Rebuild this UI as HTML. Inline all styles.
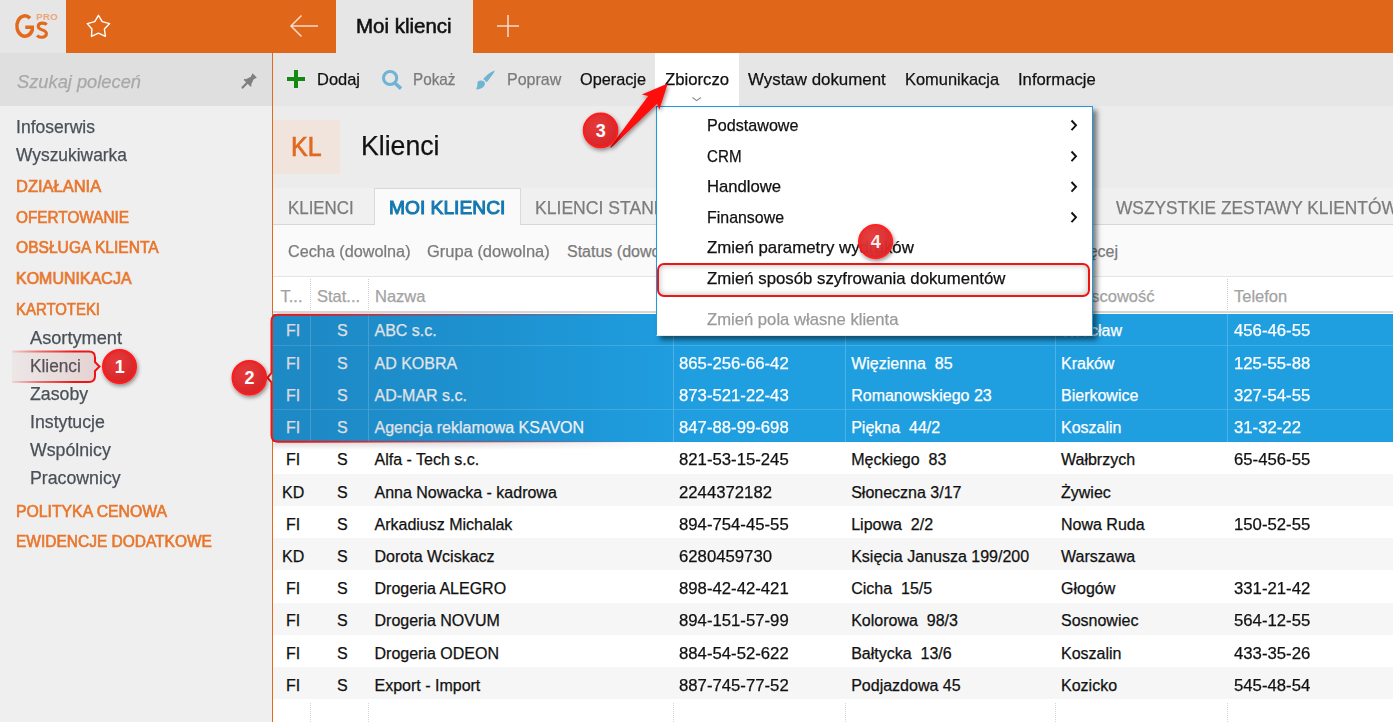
<!DOCTYPE html>
<html><head><meta charset="utf-8">
<style>
*{margin:0;padding:0;box-sizing:border-box}
html,body{width:1393px;height:722px;overflow:hidden;background:#fff;font-family:"Liberation Sans",sans-serif}
.a{position:absolute}
.t{position:absolute;white-space:pre;transform-origin:0 0;z-index:2;-webkit-text-stroke:0.25px currentColor}
.m .t{z-index:6}
</style></head><body>
<!-- top bar -->
<div class="a" style="left:0;top:0;width:66px;height:53px;background:#e6e6e6"></div>
<div class="a" style="left:66px;top:0;width:1327px;height:53px;background:#e0661a"></div>
<div class="a" style="left:336px;top:0;width:137px;height:53px;background:#e6e6e6"></div>
<!-- sidebar -->
<div class="a" style="left:0;top:53px;width:272px;height:53px;background:#dfdfdf"></div>
<div class="a" style="left:0;top:106px;width:272px;height:616px;background:#efefef"></div>
<div class="a" style="left:272px;top:53px;width:1px;height:669px;background:#e2691f;z-index:3"></div>
<!-- toolbar -->
<div class="a" style="left:273px;top:53px;width:1120px;height:53px;background:#e6e6e6"></div>
<div class="a" style="left:655px;top:53px;width:84px;height:53px;background:#fff"></div>
<!-- header -->
<div class="a" style="left:273px;top:106px;width:1120px;height:82px;background:#ececec"></div>
<div class="a" style="left:273px;top:120px;width:67px;height:54px;background:#f0e4dc"></div>
<!-- tabs -->
<div class="a" style="left:273px;top:188px;width:1120px;height:37px;background:#f0f0f0;border-bottom:1px solid #d6d6d6"></div>
<div class="a" style="left:374px;top:188px;width:147px;height:37px;background:#fafafa;border:1px solid #d9d9d9;border-bottom:none"></div>
<!-- filter -->
<div class="a" style="left:273px;top:225px;width:1120px;height:52px;background:#fafafa;border-bottom:1px solid #e4e4e4"></div>
<!-- table header -->
<div class="a" style="left:273px;top:277px;width:1120px;height:36px;background:#fff;border-bottom:2px solid #d6d6d6"></div>
<!-- rows -->
<div id="rows"></div>
<div class="a" style="left:273px;top:313.50px;width:1120px;height:32.42px;background:#1f9ee0"></div>
<div class="a" style="left:273px;top:345.62px;width:1120px;height:32.42px;background:#1f9ee0"></div>
<div class="a" style="left:273px;top:377.74px;width:1120px;height:32.42px;background:#1f9ee0"></div>
<div class="a" style="left:273px;top:409.86px;width:1120px;height:32.42px;background:#1f9ee0"></div>
<div class="a" style="left:273px;top:441.98px;width:1120px;height:32.42px;background:#fff"></div>
<div class="a" style="left:273px;top:474.10px;width:1120px;height:32.42px;background:#f6f6f6"></div>
<div class="a" style="left:273px;top:506.22px;width:1120px;height:32.42px;background:#fff"></div>
<div class="a" style="left:273px;top:538.34px;width:1120px;height:32.42px;background:#f6f6f6"></div>
<div class="a" style="left:273px;top:570.46px;width:1120px;height:32.42px;background:#fff"></div>
<div class="a" style="left:273px;top:602.58px;width:1120px;height:32.42px;background:#f6f6f6"></div>
<div class="a" style="left:273px;top:634.70px;width:1120px;height:32.42px;background:#fff"></div>
<div class="a" style="left:273px;top:666.82px;width:1120px;height:32.42px;background:#f6f6f6"></div>
<div class="a" style="left:273px;top:698.94px;width:1120px;height:32.42px;background:#fff"></div>
<div class="a" style="left:273px;top:345.12px;width:1120px;height:1px;background:#45ade6"></div>
<div class="a" style="left:273px;top:409.36px;width:1120px;height:1px;background:#45ade6"></div>
<div class="a" style="left:310px;top:313.5px;width:1px;height:128.48px;background:#4db2e8"></div>
<div class="a" style="left:310px;top:279px;width:1px;height:31px;border-left:1px dotted #cfcfcf"></div>
<div class="a" style="left:310px;top:702.9px;width:1px;height:23.1px;border-left:1px dotted #d5d5d5"></div>
<div class="a" style="left:368px;top:313.5px;width:1px;height:128.48px;background:#4db2e8"></div>
<div class="a" style="left:368px;top:279px;width:1px;height:31px;border-left:1px dotted #cfcfcf"></div>
<div class="a" style="left:368px;top:702.9px;width:1px;height:23.1px;border-left:1px dotted #d5d5d5"></div>
<div class="a" style="left:673px;top:313.5px;width:1px;height:128.48px;background:#4db2e8"></div>
<div class="a" style="left:673px;top:279px;width:1px;height:31px;border-left:1px dotted #cfcfcf"></div>
<div class="a" style="left:673px;top:702.9px;width:1px;height:23.1px;border-left:1px dotted #d5d5d5"></div>
<div class="a" style="left:845px;top:313.5px;width:1px;height:128.48px;background:#4db2e8"></div>
<div class="a" style="left:845px;top:279px;width:1px;height:31px;border-left:1px dotted #cfcfcf"></div>
<div class="a" style="left:845px;top:702.9px;width:1px;height:23.1px;border-left:1px dotted #d5d5d5"></div>
<div class="a" style="left:1055px;top:313.5px;width:1px;height:128.48px;background:#4db2e8"></div>
<div class="a" style="left:1055px;top:279px;width:1px;height:31px;border-left:1px dotted #cfcfcf"></div>
<div class="a" style="left:1055px;top:702.9px;width:1px;height:23.1px;border-left:1px dotted #d5d5d5"></div>
<div class="a" style="left:1227px;top:313.5px;width:1px;height:128.48px;background:#4db2e8"></div>
<div class="a" style="left:1227px;top:279px;width:1px;height:31px;border-left:1px dotted #cfcfcf"></div>
<div class="a" style="left:1227px;top:702.9px;width:1px;height:23.1px;border-left:1px dotted #d5d5d5"></div>
<span class="t" style="left:356.4px;top:15.96px;font-size:20px;line-height:20px;color:#111;transform:scaleX(1.024);-webkit-text-stroke:0.55px #111">Moi klienci</span>
<span class="t" style="left:17.0px;top:72.01px;font-size:19px;line-height:19px;color:#a8a8a8;font-style:italic;transform:scaleX(0.962)">Szukaj poleceń</span>
<span class="t" style="left:16.0px;top:117.86px;font-size:18px;line-height:18px;color:#4a5058;transform:scaleX(0.975)">Infoserwis</span>
<span class="t" style="left:16.0px;top:146.36px;font-size:18px;line-height:18px;color:#4a5058;transform:scaleX(0.966)">Wyszukiwarka</span>
<span class="t" style="left:16.0px;top:179.35px;font-size:16px;line-height:16px;color:#e8772e;transform:scaleX(1.030);-webkit-text-stroke:0.65px #e8772e">DZIAŁANIA</span>
<span class="t" style="left:16.0px;top:210.35px;font-size:16px;line-height:16px;color:#e8772e;transform:scaleX(0.958);-webkit-text-stroke:0.65px #e8772e">OFERTOWANIE</span>
<span class="t" style="left:16.0px;top:240.25px;font-size:16px;line-height:16px;color:#e8772e;transform:scaleX(0.975);-webkit-text-stroke:0.65px #e8772e">OBSŁUGA KLIENTA</span>
<span class="t" style="left:16.0px;top:271.45px;font-size:16px;line-height:16px;color:#e8772e;-webkit-text-stroke:0.65px #e8772e">KOMUNIKACJA</span>
<span class="t" style="left:16.0px;top:302.45px;font-size:16px;line-height:16px;color:#e8772e;transform:scaleX(0.932);-webkit-text-stroke:0.65px #e8772e">KARTOTEKI</span>
<span class="t" style="left:30.0px;top:328.76px;font-size:18px;line-height:18px;color:#4a5058;transform:scaleX(1.011)">Asortyment</span>
<span class="t" style="left:30.0px;top:356.76px;font-size:18px;line-height:18px;color:#4a5058;transform:scaleX(0.958)">Klienci</span>
<span class="t" style="left:30.0px;top:384.76px;font-size:18px;line-height:18px;color:#4a5058;transform:scaleX(0.985)">Zasoby</span>
<span class="t" style="left:30.0px;top:412.76px;font-size:18px;line-height:18px;color:#4a5058;transform:scaleX(0.985)">Instytucje</span>
<span class="t" style="left:30.0px;top:440.76px;font-size:18px;line-height:18px;color:#4a5058;transform:scaleX(0.985)">Wspólnicy</span>
<span class="t" style="left:30.0px;top:468.76px;font-size:18px;line-height:18px;color:#4a5058;transform:scaleX(0.985)">Pracownicy</span>
<span class="t" style="left:16.0px;top:504.45px;font-size:16px;line-height:16px;color:#e8772e;transform:scaleX(0.986);-webkit-text-stroke:0.65px #e8772e">POLITYKA CENOWA</span>
<span class="t" style="left:16.0px;top:534.45px;font-size:16px;line-height:16px;color:#e8772e;transform:scaleX(0.968);-webkit-text-stroke:0.65px #e8772e">EWIDENCJE DODATKOWE</span>
<span class="t" style="left:317.0px;top:70.80px;font-size:17px;line-height:17px;color:#111;transform:scaleX(0.968)">Dodaj</span>
<span class="t" style="left:413.3px;top:70.80px;font-size:17px;line-height:17px;color:#7a7a7a;transform:scaleX(0.899)">Pokaż</span>
<span class="t" style="left:507.4px;top:70.80px;font-size:17px;line-height:17px;color:#7a7a7a;transform:scaleX(0.940)">Popraw</span>
<span class="t" style="left:580.0px;top:70.80px;font-size:17px;line-height:17px;color:#111;transform:scaleX(0.957)">Operacje</span>
<span class="t" style="left:665.0px;top:70.80px;font-size:17px;line-height:17px;color:#111;transform:scaleX(0.982)">Zbiorczo</span>
<span class="t" style="left:747.7px;top:70.80px;font-size:17px;line-height:17px;color:#111;transform:scaleX(0.993)">Wystaw dokument</span>
<span class="t" style="left:904.6px;top:70.80px;font-size:17px;line-height:17px;color:#111;transform:scaleX(0.967)">Komunikacja</span>
<span class="t" style="left:1017.8px;top:70.80px;font-size:17px;line-height:17px;color:#111;transform:scaleX(0.979)">Informacje</span>
<span class="t" style="left:291.3px;top:132.59px;font-size:28px;line-height:28px;color:#e2691f;transform:scaleX(0.891);-webkit-text-stroke:0.7px #e2691f">KL</span>
<span class="t" style="left:361.0px;top:132.29px;font-size:28px;line-height:28px;color:#111;transform:scaleX(0.952)">Klienci</span>
<span class="t" style="left:288.0px;top:197.81px;font-size:19px;line-height:19px;color:#7b7b7b;transform:scaleX(0.889)">KLIENCI</span>
<span class="t" style="left:389.0px;top:197.81px;font-size:19px;line-height:19px;color:#1478b0;transform:scaleX(1.011);-webkit-text-stroke:1.0px #1478b0">MOI KLIENCI</span>
<span class="t" style="left:535.4px;top:197.81px;font-size:19px;line-height:19px;color:#7b7b7b;transform:scaleX(0.925)">KLIENCI STANDARDOWE</span>
<span class="t" style="left:1116.0px;top:197.81px;font-size:19px;line-height:19px;color:#7b7b7b;transform:scaleX(0.912)">WSZYSTKIE ZESTAWY KLIENTÓW</span>
<span class="t" style="left:287.5px;top:243.95px;font-size:16px;line-height:16px;color:#7b7b7b;transform:scaleX(1.013)">Cecha (dowolna)</span>
<span class="t" style="left:427.0px;top:243.95px;font-size:16px;line-height:16px;color:#7b7b7b;transform:scaleX(1.030)">Grupa (dowolna)</span>
<span class="t" style="left:567.0px;top:243.95px;font-size:16px;line-height:16px;color:#7b7b7b">Status (dowolny)</span>
<span class="t" style="left:1070.0px;top:243.95px;font-size:16px;line-height:16px;color:#7b7b7b">Więcej</span>
<span class="t" style="left:280.5px;top:288.33px;font-size:16.5px;line-height:16.5px;color:#a3a3a3">T...</span>
<span class="t" style="left:317.0px;top:288.33px;font-size:16.5px;line-height:16.5px;color:#a3a3a3">Stat...</span>
<span class="t" style="left:375.0px;top:288.33px;font-size:16.5px;line-height:16.5px;color:#a3a3a3">Nazwa</span>
<span class="t" style="left:679.0px;top:288.33px;font-size:16.5px;line-height:16.5px;color:#a3a3a3">NIP</span>
<span class="t" style="left:851.0px;top:288.33px;font-size:16.5px;line-height:16.5px;color:#a3a3a3">Ulica</span>
<span class="t" style="left:1061.0px;top:288.33px;font-size:16.5px;line-height:16.5px;color:#a3a3a3">Miejscowość</span>
<span class="t" style="left:1234.0px;top:288.33px;font-size:16.5px;line-height:16.5px;color:#a3a3a3">Telefon</span>
<span class="t" style="left:286.0px;top:323.45px;font-size:16px;line-height:16px;color:#fff">FI</span>
<span class="t" style="left:337.0px;top:323.45px;font-size:16px;line-height:16px;color:#fff">S</span>
<span class="t" style="left:374.5px;top:323.45px;font-size:16px;line-height:16px;color:#fff">ABC s.c.</span>
<span class="t" style="left:1061.0px;top:323.45px;font-size:16px;line-height:16px;color:#fff">Wrocław</span>
<span class="t" style="left:1234.0px;top:323.45px;font-size:16px;line-height:16px;color:#fff;transform:scaleX(1.045)">456-46-55</span>
<span class="t" style="left:286.0px;top:355.67px;font-size:16px;line-height:16px;color:#fff">FI</span>
<span class="t" style="left:337.0px;top:355.67px;font-size:16px;line-height:16px;color:#fff">S</span>
<span class="t" style="left:374.5px;top:355.67px;font-size:16px;line-height:16px;color:#fff">AD KOBRA</span>
<span class="t" style="left:679.3px;top:355.67px;font-size:16px;line-height:16px;color:#fff;transform:scaleX(1.045)">865-256-66-42</span>
<span class="t" style="left:851.2px;top:355.67px;font-size:16px;line-height:16px;color:#fff">Więzienna  85</span>
<span class="t" style="left:1061.0px;top:355.67px;font-size:16px;line-height:16px;color:#fff">Kraków</span>
<span class="t" style="left:1234.0px;top:355.67px;font-size:16px;line-height:16px;color:#fff;transform:scaleX(1.045)">125-55-88</span>
<span class="t" style="left:286.0px;top:387.89px;font-size:16px;line-height:16px;color:#fff">FI</span>
<span class="t" style="left:337.0px;top:387.89px;font-size:16px;line-height:16px;color:#fff">S</span>
<span class="t" style="left:374.5px;top:387.89px;font-size:16px;line-height:16px;color:#fff">AD-MAR s.c.</span>
<span class="t" style="left:679.3px;top:387.89px;font-size:16px;line-height:16px;color:#fff;transform:scaleX(1.045)">873-521-22-43</span>
<span class="t" style="left:851.2px;top:387.89px;font-size:16px;line-height:16px;color:#fff">Romanowskiego 23</span>
<span class="t" style="left:1061.0px;top:387.89px;font-size:16px;line-height:16px;color:#fff">Bierkowice</span>
<span class="t" style="left:1234.0px;top:387.89px;font-size:16px;line-height:16px;color:#fff;transform:scaleX(1.045)">327-54-55</span>
<span class="t" style="left:286.0px;top:420.11px;font-size:16px;line-height:16px;color:#fff">FI</span>
<span class="t" style="left:337.0px;top:420.11px;font-size:16px;line-height:16px;color:#fff">S</span>
<span class="t" style="left:374.5px;top:420.11px;font-size:16px;line-height:16px;color:#fff">Agencja reklamowa KSAVON</span>
<span class="t" style="left:679.3px;top:420.11px;font-size:16px;line-height:16px;color:#fff;transform:scaleX(1.045)">847-88-99-698</span>
<span class="t" style="left:851.2px;top:420.11px;font-size:16px;line-height:16px;color:#fff">Piękna  44/2</span>
<span class="t" style="left:1061.0px;top:420.11px;font-size:16px;line-height:16px;color:#fff">Koszalin</span>
<span class="t" style="left:1234.0px;top:420.11px;font-size:16px;line-height:16px;color:#fff;transform:scaleX(1.045)">31-32-22</span>
<span class="t" style="left:286.0px;top:452.33px;font-size:16px;line-height:16px;color:#111">FI</span>
<span class="t" style="left:337.0px;top:452.33px;font-size:16px;line-height:16px;color:#111">S</span>
<span class="t" style="left:374.5px;top:452.33px;font-size:16px;line-height:16px;color:#111">Alfa - Tech s.c.</span>
<span class="t" style="left:679.3px;top:452.33px;font-size:16px;line-height:16px;color:#111;transform:scaleX(1.045)">821-53-15-245</span>
<span class="t" style="left:851.2px;top:452.33px;font-size:16px;line-height:16px;color:#111">Męckiego  83</span>
<span class="t" style="left:1061.0px;top:452.33px;font-size:16px;line-height:16px;color:#111">Wałbrzych</span>
<span class="t" style="left:1234.0px;top:452.33px;font-size:16px;line-height:16px;color:#111;transform:scaleX(1.045)">65-456-55</span>
<span class="t" style="left:282.0px;top:484.55px;font-size:16px;line-height:16px;color:#111">KD</span>
<span class="t" style="left:337.0px;top:484.55px;font-size:16px;line-height:16px;color:#111">S</span>
<span class="t" style="left:374.5px;top:484.55px;font-size:16px;line-height:16px;color:#111">Anna Nowacka - kadrowa</span>
<span class="t" style="left:679.3px;top:484.55px;font-size:16px;line-height:16px;color:#111;transform:scaleX(1.045)">2244372182</span>
<span class="t" style="left:851.2px;top:484.55px;font-size:16px;line-height:16px;color:#111">Słoneczna 3/17</span>
<span class="t" style="left:1061.0px;top:484.55px;font-size:16px;line-height:16px;color:#111">Żywiec</span>
<span class="t" style="left:286.0px;top:516.77px;font-size:16px;line-height:16px;color:#111">FI</span>
<span class="t" style="left:337.0px;top:516.77px;font-size:16px;line-height:16px;color:#111">S</span>
<span class="t" style="left:374.5px;top:516.77px;font-size:16px;line-height:16px;color:#111">Arkadiusz Michalak</span>
<span class="t" style="left:679.3px;top:516.77px;font-size:16px;line-height:16px;color:#111;transform:scaleX(1.045)">894-754-45-55</span>
<span class="t" style="left:851.2px;top:516.77px;font-size:16px;line-height:16px;color:#111">Lipowa  2/2</span>
<span class="t" style="left:1061.0px;top:516.77px;font-size:16px;line-height:16px;color:#111">Nowa Ruda</span>
<span class="t" style="left:1234.0px;top:516.77px;font-size:16px;line-height:16px;color:#111;transform:scaleX(1.045)">150-52-55</span>
<span class="t" style="left:282.0px;top:548.99px;font-size:16px;line-height:16px;color:#111">KD</span>
<span class="t" style="left:337.0px;top:548.99px;font-size:16px;line-height:16px;color:#111">S</span>
<span class="t" style="left:374.5px;top:548.99px;font-size:16px;line-height:16px;color:#111">Dorota Wciskacz</span>
<span class="t" style="left:679.3px;top:548.99px;font-size:16px;line-height:16px;color:#111;transform:scaleX(1.045)">6280459730</span>
<span class="t" style="left:851.2px;top:548.99px;font-size:16px;line-height:16px;color:#111">Księcia Janusza 199/200</span>
<span class="t" style="left:1061.0px;top:548.99px;font-size:16px;line-height:16px;color:#111">Warszawa</span>
<span class="t" style="left:286.0px;top:581.21px;font-size:16px;line-height:16px;color:#111">FI</span>
<span class="t" style="left:337.0px;top:581.21px;font-size:16px;line-height:16px;color:#111">S</span>
<span class="t" style="left:374.5px;top:581.21px;font-size:16px;line-height:16px;color:#111">Drogeria ALEGRO</span>
<span class="t" style="left:679.3px;top:581.21px;font-size:16px;line-height:16px;color:#111;transform:scaleX(1.045)">898-42-42-421</span>
<span class="t" style="left:851.2px;top:581.21px;font-size:16px;line-height:16px;color:#111">Cicha  15/5</span>
<span class="t" style="left:1061.0px;top:581.21px;font-size:16px;line-height:16px;color:#111">Głogów</span>
<span class="t" style="left:1234.0px;top:581.21px;font-size:16px;line-height:16px;color:#111;transform:scaleX(1.045)">331-21-42</span>
<span class="t" style="left:286.0px;top:613.43px;font-size:16px;line-height:16px;color:#111">FI</span>
<span class="t" style="left:337.0px;top:613.43px;font-size:16px;line-height:16px;color:#111">S</span>
<span class="t" style="left:374.5px;top:613.43px;font-size:16px;line-height:16px;color:#111">Drogeria NOVUM</span>
<span class="t" style="left:679.3px;top:613.43px;font-size:16px;line-height:16px;color:#111;transform:scaleX(1.045)">894-151-57-99</span>
<span class="t" style="left:851.2px;top:613.43px;font-size:16px;line-height:16px;color:#111">Kolorowa  98/3</span>
<span class="t" style="left:1061.0px;top:613.43px;font-size:16px;line-height:16px;color:#111">Sosnowiec</span>
<span class="t" style="left:1234.0px;top:613.43px;font-size:16px;line-height:16px;color:#111;transform:scaleX(1.045)">564-12-55</span>
<span class="t" style="left:286.0px;top:645.65px;font-size:16px;line-height:16px;color:#111">FI</span>
<span class="t" style="left:337.0px;top:645.65px;font-size:16px;line-height:16px;color:#111">S</span>
<span class="t" style="left:374.5px;top:645.65px;font-size:16px;line-height:16px;color:#111">Drogeria ODEON</span>
<span class="t" style="left:679.3px;top:645.65px;font-size:16px;line-height:16px;color:#111;transform:scaleX(1.045)">884-54-52-622</span>
<span class="t" style="left:851.2px;top:645.65px;font-size:16px;line-height:16px;color:#111">Bałtycka  13/6</span>
<span class="t" style="left:1061.0px;top:645.65px;font-size:16px;line-height:16px;color:#111">Koszalin</span>
<span class="t" style="left:1234.0px;top:645.65px;font-size:16px;line-height:16px;color:#111;transform:scaleX(1.045)">433-35-26</span>
<span class="t" style="left:286.0px;top:677.87px;font-size:16px;line-height:16px;color:#111">FI</span>
<span class="t" style="left:337.0px;top:677.87px;font-size:16px;line-height:16px;color:#111">S</span>
<span class="t" style="left:374.5px;top:677.87px;font-size:16px;line-height:16px;color:#111">Export - Import</span>
<span class="t" style="left:679.3px;top:677.87px;font-size:16px;line-height:16px;color:#111;transform:scaleX(1.045)">887-745-77-52</span>
<span class="t" style="left:851.2px;top:677.87px;font-size:16px;line-height:16px;color:#111">Podjazdowa 45</span>
<span class="t" style="left:1061.0px;top:677.87px;font-size:16px;line-height:16px;color:#111">Kozicko</span>
<span class="t" style="left:1234.0px;top:677.87px;font-size:16px;line-height:16px;color:#111;transform:scaleX(1.045)">545-48-54</span>
<span class="t" style="left:707.0px;top:116.50px;font-size:17px;line-height:17px;color:#111;transform:scaleX(0.949);z-index:6">Podstawowe</span>
<span class="t" style="left:707.0px;top:147.60px;font-size:17px;line-height:17px;color:#111;transform:scaleX(0.891);z-index:6">CRM</span>
<span class="t" style="left:707.0px;top:178.40px;font-size:17px;line-height:17px;color:#111;transform:scaleX(0.980);z-index:6">Handlowe</span>
<span class="t" style="left:707.0px;top:209.30px;font-size:17px;line-height:17px;color:#111;transform:scaleX(0.937);z-index:6">Finansowe</span>
<span class="t" style="left:707.0px;top:239.20px;font-size:17px;line-height:17px;color:#111;transform:scaleX(0.991);z-index:6">Zmień parametry wydruków</span>
<span class="t" style="left:707.0px;top:270.30px;font-size:17px;line-height:17px;color:#111;transform:scaleX(0.987);z-index:6">Zmień sposób szyfrowania dokumentów</span>
<span class="t" style="left:707.0px;top:311.00px;font-size:17px;line-height:17px;color:#9a9a9a;transform:scaleX(0.979);z-index:6">Zmień pola własne klienta</span>

<svg class="a" style="left:0;top:0;z-index:4" width="1393" height="722" viewBox="0 0 1393 722">
 <!-- logo -->
 <path d="M30,18.2 A8,10.2 0 1,0 32.3,29.9 V27.3 H25.3" fill="none" stroke="#e36a1c" stroke-width="3.5"/>
 <path d="M46.6,24.8 C44.8,22.4 38.2,22.2 38.2,26.6 C38.2,30.6 46.4,29.2 46.4,33.6 C46.4,38.2 39,38 37.2,35.4" fill="none" stroke="#e36a1c" stroke-width="3.1"/>
 <text x="36.2" y="19.8" font-family="Liberation Sans" font-weight="bold" font-size="9.6" fill="#eea57a" letter-spacing="0.35">PRO</text>
 <!-- star -->
 <path d="M98.45,15.3 L102.2,21.6 L109.6,23.6 L104.4,29 L105.4,36.4 L98.45,33.2 L91.5,36.4 L91.9,29 L87.3,23.6 L94.7,21.6 Z" fill="none" stroke="#fff" stroke-width="1.4" stroke-linejoin="round"/>
 <!-- back arrow -->
 <path d="M318,26 H291 M301.5,15.5 L291,26 L301.5,36.5" fill="none" stroke="#f6dccb" stroke-width="1.5"/>
 <!-- new tab plus -->
 <path d="M497,26 H519 M508,15 V37" fill="none" stroke="#f6dccb" stroke-width="1.5"/>
 <!-- pin -->
 <path d="M252.5,73.2 L256.8,77.6 L253.5,79.5 L251.2,84.5 L251.6,86.2 L250.4,86.6 L243.8,80 L244.2,78.8 L245.9,79.2 L250.9,76.8 Z" fill="#7f7f7f"/>
 <path d="M247.2,82.8 L242.6,87.6" stroke="#7f7f7f" stroke-width="2.2" stroke-linecap="round"/>
 <!-- green plus -->
 <path d="M287,79 H305 M296,70 V88" fill="none" stroke="#128a12" stroke-width="4"/>
 <!-- search -->
 <circle cx="390.1" cy="78" r="6.6" fill="none" stroke="#70b3d3" stroke-width="3"/>
 <path d="M394.8,83 L401,88.6" stroke="#70b3d3" stroke-width="3.6"/>
 <!-- brush -->
 <path d="M483.2,79 C486,75.5 490,72 494.8,70.4 C494.6,71.5 493,74.5 486.6,82.2 Z" fill="#70b3d3"/>
 <path d="M477.9,81.6 C480.2,79.8 483.6,80.2 484.8,82.6 C485.6,85.8 482.4,89.4 476.4,89.6 C476.2,88.2 477,87.4 477.4,85.4 C477.6,83.4 477.2,82.4 477.9,81.6 Z" fill="#70b3d3"/>
 <!-- toolbar chevron -->
 <path d="M692.5,97.5 L696.7,100.6 L700.9,97.5" fill="none" stroke="#8a8a8a" stroke-width="1.1"/>
</svg>
<!-- menu -->
<div class="a" style="left:656px;top:106px;width:437px;height:230px;background:#fff;border:1px solid #1e9be0;border-bottom-color:#e8e8e8;box-shadow:4px 4px 5px rgba(0,0,0,.5);z-index:5"></div>
<svg class="a" style="left:0;top:0;z-index:6" width="1393" height="722" viewBox="0 0 1393 722">
 <path d="M1071.5,120.5 L1076,125.3 L1071.5,130.1 M1071.5,151.5 L1076,156.3 L1071.5,161.1 M1071.5,182 L1076,186.8 L1071.5,191.6 M1071.5,212.5 L1076,217.3 L1071.5,222.1" fill="none" stroke="#111" stroke-width="1.9"/>
</svg>


<!-- annotation overlays -->
<div class="a" style="left:273px;top:442.5px;width:400px;height:7px;z-index:3;background:linear-gradient(to bottom,rgba(0,0,0,.12),rgba(0,0,0,0));-webkit-mask-image:linear-gradient(to right,#000 45%,transparent)"></div>
<div class="a" style="left:271px;top:314px;width:420px;height:129px;z-index:3;background:linear-gradient(to right,rgba(20,30,60,.17),rgba(20,30,60,.10) 50%,rgba(20,30,60,0));border-radius:7px 0 0 7px"></div>
<div class="a" style="left:657px;top:262.5px;width:433px;height:34px;z-index:7;border:2px solid #ee1515;border-radius:7px;box-shadow:inset 0 0 6px rgba(0,0,0,.28)"></div>
<svg class="a" style="left:0;top:0;z-index:10" width="1393" height="722" viewBox="0 0 1393 722">
 <defs>
  <filter id="sh" x="-50%" y="-50%" width="200%" height="200%">
   <feGaussianBlur in="SourceAlpha" stdDeviation="2.2"/><feOffset dx="1" dy="1.5"/>
   <feComponentTransfer><feFuncA type="linear" slope="0.45"/></feComponentTransfer>
   <feMerge><feMergeNode/><feMergeNode in="SourceGraphic"/></feMerge>
  </filter>
  <radialGradient id="bg" cx="40%" cy="35%" r="70%"><stop offset="0" stop-color="#e63a3a"/><stop offset="1" stop-color="#d62428"/></radialGradient>
  <linearGradient id="g1" gradientUnits="userSpaceOnUse" x1="12" y1="0" x2="75" y2="0"><stop offset="0" stop-color="#ee1515" stop-opacity="0.1"/><stop offset="0.4" stop-color="#ee1515" stop-opacity="0.55"/><stop offset="1" stop-color="#ee1515"/></linearGradient>
  <linearGradient id="g1f" gradientUnits="userSpaceOnUse" x1="12" y1="0" x2="95" y2="0"><stop offset="0" stop-color="#c06060" stop-opacity="0.06"/><stop offset="1" stop-color="#b04848" stop-opacity="0.17"/></linearGradient>
  <linearGradient id="g2" gradientUnits="userSpaceOnUse" x1="300" y1="0" x2="640" y2="0"><stop offset="0" stop-color="#ee1515"/><stop offset="0.3" stop-color="#ee1515" stop-opacity="0.55"/><stop offset="1" stop-color="#ee1515" stop-opacity="0"/></linearGradient>
 </defs>
 <!-- annotation 1 box -->
 <path d="M12,351.5 H89 Q95,351.5 95,357.5 V362 L99.5,366.5 L95,371 V376 Q95,382 89,382 H12" fill="url(#g1f)" stroke="url(#g1)" stroke-width="2"/>
 <!-- annotation 2 box -->
 <path d="M660,314.8 H278 Q271.5,314.8 271.5,321.3 V373 L267.5,377.7 L271.5,382.4 V435 Q271.5,441.8 278,441.8 H660" fill="none" stroke="url(#g2)" stroke-width="2"/>
 <!-- arrow -->
 <polygon points="610,147.2 648.2,96 641.9,94.6 667.8,83.5 659.3,109.8 657.1,103.7 611.5,147.6" fill="#ff0a0a" filter="url(#sh)"/>
 <!-- badges -->
 <g filter="url(#sh)">
  <circle cx="119.5" cy="366.6" r="16.5" fill="url(#bg)" stroke="#ff1a1a" stroke-width="2"/>
  <circle cx="249.3" cy="377.7" r="16.8" fill="url(#bg)" stroke="#ff1a1a" stroke-width="2"/>
  <circle cx="600.6" cy="130.4" r="16.8" fill="url(#bg)" stroke="#ff1a1a" stroke-width="2"/>
 </g>
 <g filter="url(#sh)" opacity="0.97">
  <circle cx="875.6" cy="241.6" r="16.6" fill="url(#bg)" stroke="#ff1a1a" stroke-width="2"/>
 </g>
 <g font-family="Liberation Sans" font-weight="bold" font-size="18" fill="#fff" text-anchor="middle">
  <text x="119.8" y="373">1</text>
  <text x="249.6" y="384.2">2</text>
  <text x="600.8" y="136.9">3</text>
  <text x="875.8" y="248.1" fill-opacity="0.92">4</text>
 </g>
</svg>

</body></html>
